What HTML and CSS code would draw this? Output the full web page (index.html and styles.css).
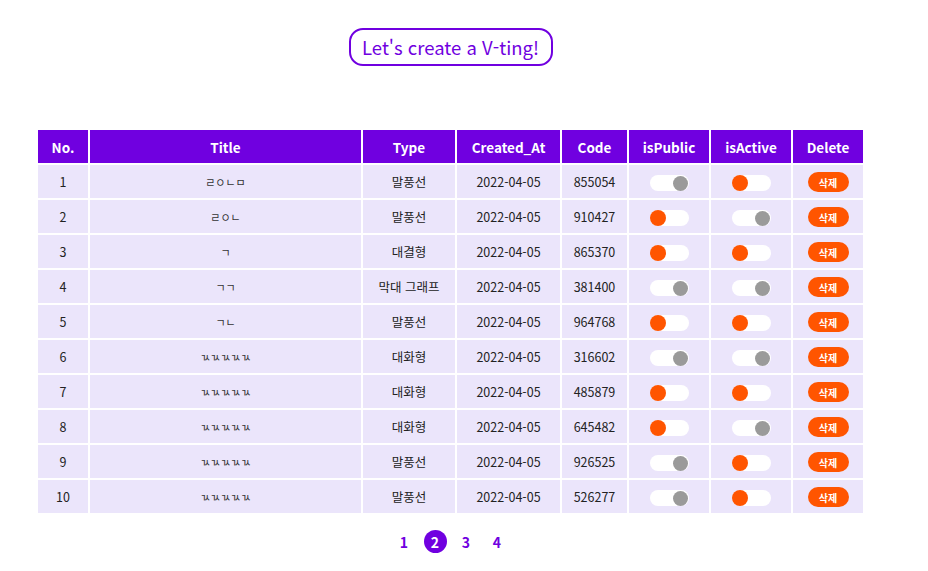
FILE: index.html
```html
<!DOCTYPE html>
<html lang="ko">
<head>
<meta charset="utf-8">
<title>V-ting</title>
<link rel="stylesheet" href="styles.css">
</head>
<body>
<div class="page">
  <div class="hero">
    <button class="create-btn">Let's create a V-ting!</button>
  </div>
  <table class="list">
    <colgroup>
      <col class="c-no"><col class="c-title"><col class="c-type"><col class="c-date"><col class="c-code"><col class="c-pub"><col class="c-act"><col class="c-del">
    </colgroup>
    <thead>
      <tr><th>No.</th><th>Title</th><th>Type</th><th>Created_At</th><th>Code</th><th>isPublic</th><th>isActive</th><th>Delete</th></tr>
    </thead>
    <tbody>
      <tr><td>1</td><td class="title">ㄹㅇㄴㅁ</td><td>말풍선</td><td>2022-04-05</td><td>855054</td><td><span class="toggle on"><i></i></span></td><td><span class="toggle"><i></i></span></td><td><button class="del">삭제</button></td></tr>
      <tr><td>2</td><td class="title">ㄹㅇㄴ</td><td>말풍선</td><td>2022-04-05</td><td>910427</td><td><span class="toggle"><i></i></span></td><td><span class="toggle on"><i></i></span></td><td><button class="del">삭제</button></td></tr>
      <tr><td>3</td><td class="title">ㄱ</td><td>대결형</td><td>2022-04-05</td><td>865370</td><td><span class="toggle"><i></i></span></td><td><span class="toggle"><i></i></span></td><td><button class="del">삭제</button></td></tr>
      <tr><td>4</td><td class="title">ㄱㄱ</td><td>막대 그래프</td><td>2022-04-05</td><td>381400</td><td><span class="toggle on"><i></i></span></td><td><span class="toggle on"><i></i></span></td><td><button class="del">삭제</button></td></tr>
      <tr><td>5</td><td class="title">ㄱㄴ</td><td>말풍선</td><td>2022-04-05</td><td>964768</td><td><span class="toggle"><i></i></span></td><td><span class="toggle"><i></i></span></td><td><button class="del">삭제</button></td></tr>
      <tr><td>6</td><td class="title">ㄳㄳㄳㄳㄳ</td><td>대화형</td><td>2022-04-05</td><td>316602</td><td><span class="toggle on"><i></i></span></td><td><span class="toggle on"><i></i></span></td><td><button class="del">삭제</button></td></tr>
      <tr><td>7</td><td class="title">ㄳㄳㄳㄳㄳ</td><td>대화형</td><td>2022-04-05</td><td>485879</td><td><span class="toggle"><i></i></span></td><td><span class="toggle"><i></i></span></td><td><button class="del">삭제</button></td></tr>
      <tr><td>8</td><td class="title">ㄳㄳㄳㄳㄳ</td><td>대화형</td><td>2022-04-05</td><td>645482</td><td><span class="toggle"><i></i></span></td><td><span class="toggle on"><i></i></span></td><td><button class="del">삭제</button></td></tr>
      <tr><td>9</td><td class="title">ㄳㄳㄳㄳㄳ</td><td>말풍선</td><td>2022-04-05</td><td>926525</td><td><span class="toggle on"><i></i></span></td><td><span class="toggle"><i></i></span></td><td><button class="del">삭제</button></td></tr>
      <tr><td>10</td><td class="title">ㄳㄳㄳㄳㄳ</td><td>말풍선</td><td>2022-04-05</td><td>526277</td><td><span class="toggle on"><i></i></span></td><td><span class="toggle"><i></i></span></td><td><button class="del">삭제</button></td></tr>
    </tbody>
  </table>
  <nav class="pager">
    <span class="pg">1</span>
    <span class="pg active">2</span>
    <span class="pg">3</span>
    <span class="pg">4</span>
  </nav>
</div>
</body>
</html>
```

FILE: styles.css
```css
html, body {
  margin: 0;
  padding: 0;
  background: #ffffff;
}
body {
  font-family: "Noto Sans CJK KR", "Noto Sans", sans-serif;
  color: #222222;
}
.page {
  width: 901px;
  display: flex;
  flex-direction: column;
  align-items: center;
}
.hero {
  padding-top: 28px;
  height: 128px;
  box-sizing: border-box;
}
.create-btn {
  width: 204px;
  height: 38px;
  padding: 0;
  border: 2px solid #7000e0;
  border-radius: 14px;
  background: #ffffff;
  color: #7000e0;
  font-family: "Noto Sans CJK KR", sans-serif;
  font-size: 18.5px;
  font-weight: 400;
  line-height: 1;
  white-space: nowrap;
  box-sizing: border-box;
}
.list {
  table-layout: fixed;
  width: 829px;
  border-collapse: separate;
  border-spacing: 2px;
  font-size: 12.5px;
}
.c-no { width: 50px; }
.c-title { width: 271px; }
.c-type { width: 92px; }
.c-date { width: 103px; }
.c-code { width: 65px; }
.c-pub { width: 80px; }
.c-act { width: 80px; }
.c-del { width: 70px; }
.list th {
  background: #7000e0;
  color: #ffffff;
  font-weight: 700;
  font-size: 13.5px;
  height: 33px;
  padding: 0;
  text-align: center;
}
.list td {
  background: #ebe5fb;
  height: 33px;
  padding: 0;
  text-align: center;
  vertical-align: middle;
  color: #222222;
}
.list td.title {
  font-size: 11px;
  color: #333333;
}
.toggle {
  display: inline-flex;
  width: 39px;
  height: 16px;
  border-radius: 8px;
  background: #ffffff;
  align-items: center;
  vertical-align: middle;
  justify-content: flex-start;
}
.toggle i {
  display: block;
  width: 16px;
  height: 16px;
  border-radius: 50%;
  background: #ff5500;
}
.toggle.on {
  justify-content: flex-end;
}
.toggle.on i {
  width: 15px;
  height: 15px;
  background: #9a9a9a;
  margin-right: 1px;
}
.del {
  width: 41px;
  height: 20px;
  border: none;
  border-radius: 10px;
  background: #ff5500;
  color: #ffffff;
  font-family: "Noto Sans CJK KR", sans-serif;
  font-size: 10px;
  font-weight: 700;
  padding: 0;
  vertical-align: middle;
}
.pager {
  display: flex;
  gap: 8px;
  margin-top: 15px;
  align-items: center;
}
.pg {
  width: 23px;
  height: 23px;
  border-radius: 50%;
  display: flex;
  align-items: center;
  justify-content: center;
  font-size: 14px;
  font-weight: 700;
  color: #7000e0;
}
.pg.active {
  background: #7000e0;
  color: #ffffff;
}
```
